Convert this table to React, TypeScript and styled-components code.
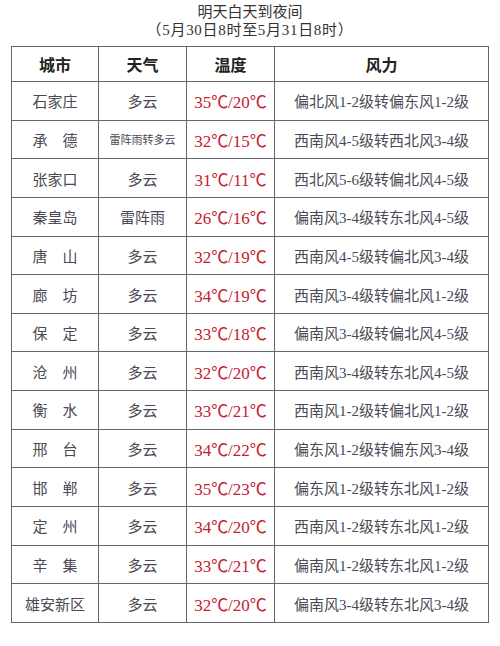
import React from "react";
import styled, { createGlobalStyle } from "styled-components";

const Global = createGlobalStyle`
  html, body { margin: 0; padding: 0; background: #ffffff; }
  body { font-family: "Liberation Serif", "Noto Sans CJK SC", serif; }
`;

const Page = styled.div`
  width: 500px;
  height: 646px;
  display: flex;
  flex-direction: column;
  align-items: center;
  padding-top: 3px;
  box-sizing: border-box;
`;

const Title = styled.div<{ $wide?: boolean }>`
  font-size: 15px;
  line-height: 18px;
  color: #333;
  text-align: center;
  letter-spacing: ${(p) => (p.$wide ? "0.7px" : "0")};
`;

const Grid = styled.div`
  margin-top: 7px;
  width: 478px;
  height: 577px;
  box-sizing: border-box;
  display: grid;
  grid-template-columns: 87px 88px 88px 1fr;
  grid-template-rows: 35px repeat(14, 1fr);
  border-top: 1px solid #666;
  border-left: 1px solid #666;
`;

const Cell = styled.div<{ $head?: boolean; $red?: boolean; $small?: boolean }>`
  border-right: 1px solid #666;
  border-bottom: 1px solid #666;
  display: flex;
  align-items: center;
  justify-content: center;
  white-space: pre;
  font-size: ${(p) => (p.$small ? "11px" : p.$head ? "16px" : "15px")};
  font-weight: ${(p) => (p.$head ? 700 : 400)};
  color: ${(p) => (p.$head ? "#222" : p.$red ? "#c4212f" : "#4a4a55")};
`;

const Temp = styled.span`
  font-size: 17px;
`;

type Row = [string, string, string, string];

const rows: Row[] = [
  ["石家庄", "多云", "35℃/20℃", "偏北风1-2级转偏东风1-2级"],
  ["承　德", "雷阵雨转多云", "32℃/15℃", "西南风4-5级转西北风3-4级"],
  ["张家口", "多云", "31℃/11℃", "西北风5-6级转偏北风4-5级"],
  ["秦皇岛", "雷阵雨", "26℃/16℃", "偏南风3-4级转东北风4-5级"],
  ["唐　山", "多云", "32℃/19℃", "西南风4-5级转偏北风3-4级"],
  ["廊　坊", "多云", "34℃/19℃", "西南风3-4级转偏北风1-2级"],
  ["保　定", "多云", "33℃/18℃", "偏南风3-4级转偏北风4-5级"],
  ["沧　州", "多云", "32℃/20℃", "西南风3-4级转东北风4-5级"],
  ["衡　水", "多云", "33℃/21℃", "西南风1-2级转偏北风1-2级"],
  ["邢　台", "多云", "34℃/22℃", "偏东风1-2级转偏东风3-4级"],
  ["邯　郸", "多云", "35℃/23℃", "偏东风1-2级转东北风1-2级"],
  ["定　州", "多云", "34℃/20℃", "西南风1-2级转东北风1-2级"],
  ["辛　集", "多云", "33℃/21℃", "偏南风1-2级转东北风1-2级"],
  ["雄安新区", "多云", "32℃/20℃", "偏南风3-4级转东北风3-4级"],
];

export default function App() {
  return (
    <Page>
      <Global />
      <Title>明天白天到夜间</Title>
      <Title $wide>（5月30日8时至5月31日8时）</Title>
      <Grid>
        <Cell $head>城市</Cell>
        <Cell $head>天气</Cell>
        <Cell $head>温度</Cell>
        <Cell $head>风力</Cell>
        {rows.map((r, i) => (
          <React.Fragment key={i}>
            <Cell>{r[0]}</Cell>
            <Cell $small={r[1].length > 4}>{r[1]}</Cell>
            <Cell $red>
              <Temp>{r[2]}</Temp>
            </Cell>
            <Cell>{r[3]}</Cell>
          </React.Fragment>
        ))}
      </Grid>
    </Page>
  );
}
